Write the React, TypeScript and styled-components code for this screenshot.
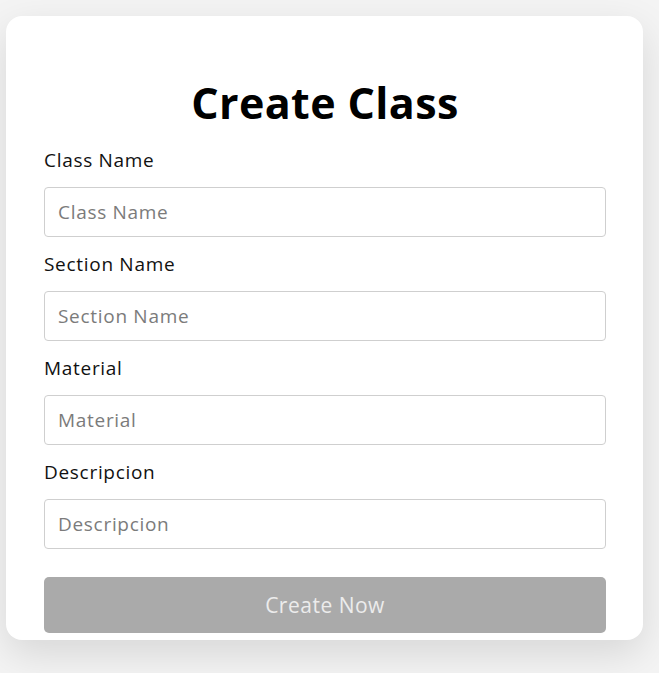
import React from 'react'
import styled, { createGlobalStyle } from 'styled-components'

const GlobalStyle = createGlobalStyle`
  body {
    margin: 0;
    background: #f4f4f4;
    font-family: 'Open Sans', 'Liberation Sans', sans-serif;
  }
`

const Page = styled.div`
  padding: 16px 16px 40px 6px;
`

const Card = styled.div`
  background: #fff;
  border-radius: 16px;
  box-shadow: 0 14px 40px rgba(0, 0, 0, 0.12);
  padding: 60px 37px 7px 38px;
`

const Title = styled.h1`
  margin: 0 0 17px;
  text-align: center;
  font-size: 43px;
  font-weight: 700;
  letter-spacing: 0.4px;
  line-height: 54px;
  color: #000;
`

const Field = styled.div`
  display: flex;
  flex-direction: column;
  margin-bottom: 14px;
`

const Label = styled.label`
  font-size: 19px;
  letter-spacing: 0.7px;
  line-height: 26px;
  color: #111;
  margin-bottom: 14px;
`

const Input = styled.input`
  box-sizing: border-box;
  height: 50px;
  border: 1px solid #cfcfcf;
  border-radius: 4px;
  padding: 0 13px;
  font-family: inherit;
  font-size: 19px;
  letter-spacing: 0.7px;
  color: #333;
  &::placeholder {
    color: #7b7b7b;
  }
`

const Button = styled.button`
  width: 100%;
  height: 56px;
  margin-top: 14px;
  border: none;
  border-radius: 5px;
  background: #aaaaaa;
  color: #ececec;
  font-family: inherit;
  font-size: 21px;
  letter-spacing: 0.5px;
`

const fields = ['Class Name', 'Section Name', 'Material', 'Descripcion']

const App = () => (
  <Page>
    <GlobalStyle />
    <Card>
      <Title>Create Class</Title>
      {fields.map((f) => (
        <Field key={f}>
          <Label>{f}</Label>
          <Input placeholder={f} />
        </Field>
      ))}
      <Button>Create Now</Button>
    </Card>
  </Page>
)

export default App
